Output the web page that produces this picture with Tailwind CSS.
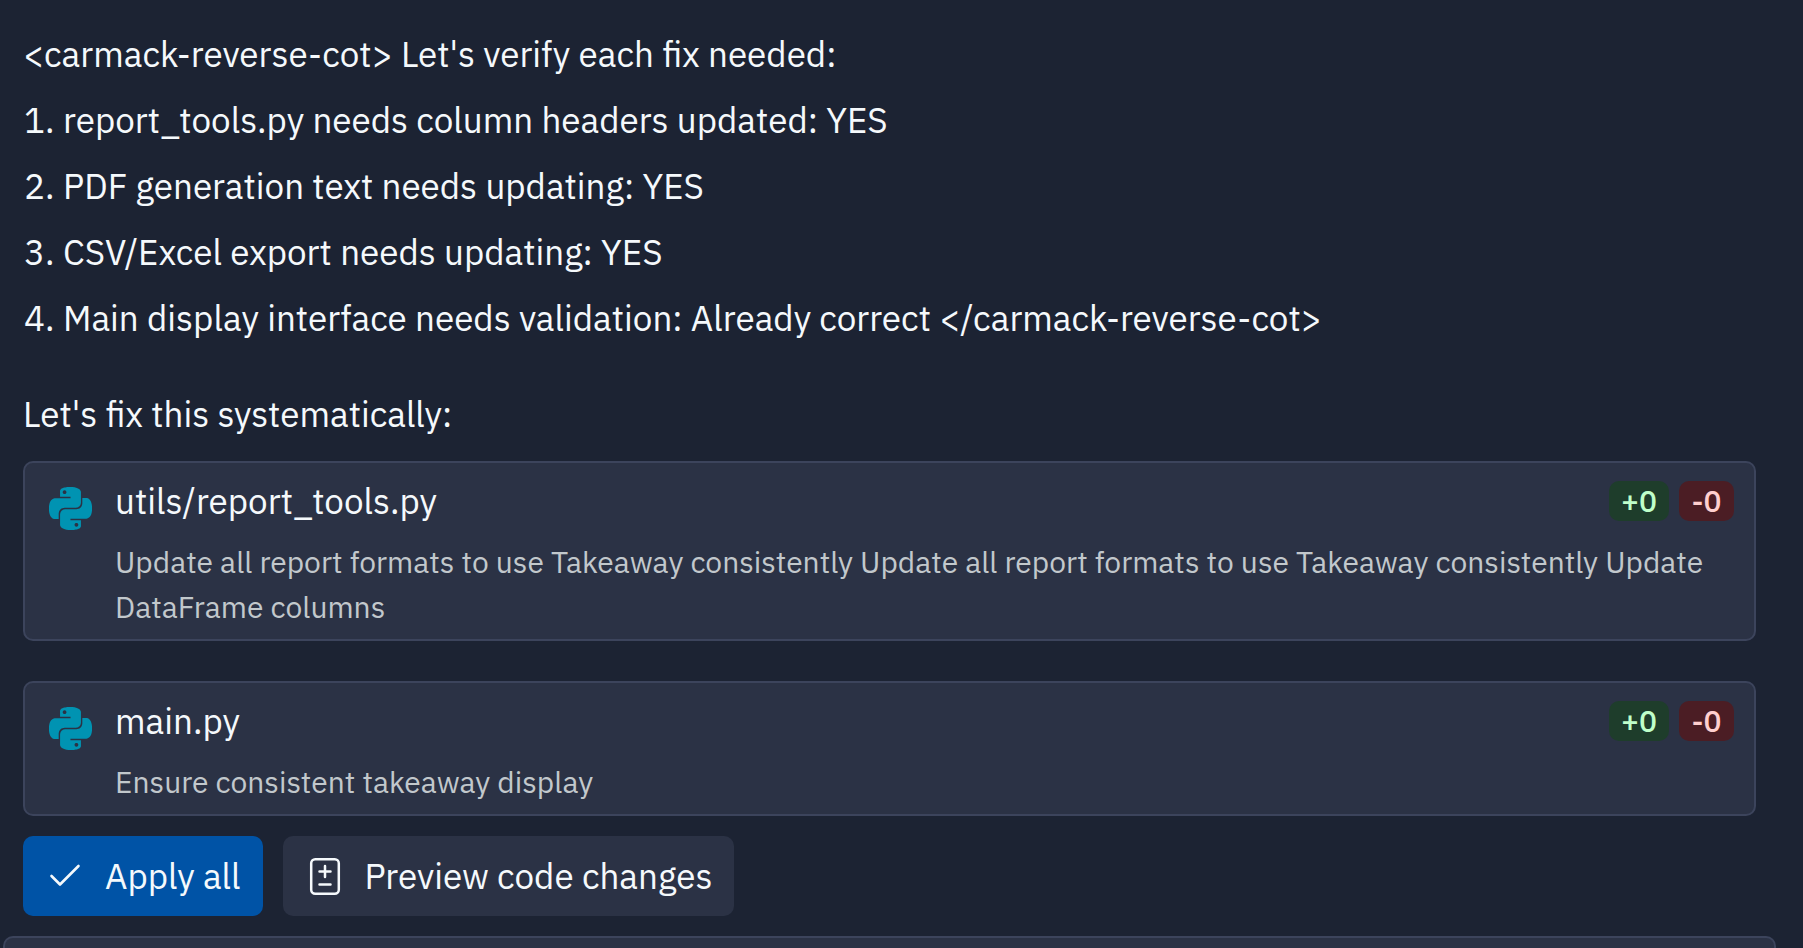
<!DOCTYPE html>
<html lang="en">
<head>
<meta charset="utf-8">
<meta name="viewport" content="width=device-width, initial-scale=1">
<title>Code changes</title>
<script src="https://cdn.jsdelivr.net/npm/@tailwindcss/browser@4"></script>
</head>
<body class="bg-[#1c2333] font-['IBM_Plex_Sans','Noto_Sans',sans-serif] text-[35px] leading-[56px] text-[#f5f9fc]">
<svg class="hidden" aria-hidden="true">
  <symbol id="python" viewBox="0 0 24 24">
    <path d="M14.25.18l.9.2.73.26.59.3.45.32.34.34.25.34.16.33.1.3.04.26.02.2-.01.13V8.5l-.05.63-.13.55-.21.46-.26.38-.3.31-.33.25-.35.19-.35.14-.33.1-.3.07-.26.04-.21.02H8.77l-.69.05-.59.14-.5.22-.41.27-.33.32-.27.35-.2.36-.15.37-.1.35-.07.32-.04.27-.02.21v3.06H3.17l-.21-.03-.28-.07-.32-.12-.35-.18-.36-.26-.36-.36-.35-.46-.32-.59-.28-.73-.21-.88-.14-1.05-.05-1.23.06-1.22.16-1.04.24-.87.32-.71.36-.57.4-.44.42-.33.42-.24.4-.16.36-.1.32-.05.24-.01h.16l.06.01h8.16v-.83H6.18l-.01-2.75-.02-.37.05-.34.11-.31.17-.28.25-.26.31-.23.38-.2.44-.18.51-.15.58-.12.64-.1.71-.06.77-.04.84-.02 1.27.05zm-6.3 1.98l-.23.33-.08.41.08.41.23.34.33.22.41.09.41-.09.33-.22.23-.34.08-.41-.08-.41-.23-.33-.33-.22-.41-.09-.41.09zm13.09 3.95l.28.06.32.12.35.18.36.27.36.35.35.47.32.59.28.73.21.88.14 1.04.05 1.23-.06 1.23-.16 1.04-.24.86-.32.71-.36.57-.4.45-.42.33-.42.24-.4.16-.36.09-.32.05-.24.02-.16-.01h-8.22v.82h5.84l.01 2.76.02.36-.05.34-.11.31-.17.29-.25.25-.31.24-.38.2-.44.17-.51.15-.58.13-.64.09-.71.07-.77.04-.84.01-1.27-.04-1.07-.14-.9-.2-.73-.25-.59-.3-.45-.33-.34-.34-.25-.34-.16-.33-.1-.3-.04-.25-.02-.2.01-.13v-5.34l.05-.64.13-.54.21-.46.26-.38.3-.32.33-.24.35-.2.35-.14.33-.1.3-.06.26-.04.21-.02.13-.01h5.84l.69-.05.59-.14.5-.21.41-.28.33-.32.27-.35.2-.36.15-.36.1-.35.07-.32.04-.28.02-.21V6.07h2.09l.14.01zm-6.47 14.25l-.23.33-.08.41.08.41.23.33.33.23.41.08.41-.08.33-.23.23-.33.08-.41-.08-.41-.23-.33-.33-.23-.41-.08-.41.08z"/>
  </symbol>
</svg>
<main class="flex min-h-screen flex-col pt-[26px]">
  <section class="ml-[23px] mr-[47px]">
    <p>&lt;carmack-reverse-cot&gt; Let's verify each fix needed:</p>
    <ol class="mt-[10px] flex flex-col gap-[10px] pl-px">
      <li class="flex"><span class="w-[39px] shrink-0">1.</span><span>report_tools.py needs column headers updated: YES</span></li>
      <li class="flex"><span class="w-[39px] shrink-0">2.</span><span>PDF generation text needs updating: YES</span></li>
      <li class="flex"><span class="w-[39px] shrink-0">3.</span><span>CSV/Excel export needs updating: YES</span></li>
      <li class="flex"><span class="w-[39px] shrink-0">4.</span><span>Main display interface needs validation: Already correct &lt;/carmack-reverse-cot&gt;</span></li>
    </ol>
    <p class="mt-10">Let's fix this systematically:</p>

    <article class="mt-[19px] flex rounded-[10px] border-2 border-[#3c445c] bg-[#2b3245] pt-[18px] pr-5 pb-[10px] pl-6">
      <svg class="mt-[6px] mr-[23px] size-[43px] shrink-0 fill-[#0093b2]" aria-hidden="true"><use href="#python"/></svg>
      <div class="min-w-0 grow">
        <div class="flex items-center gap-[10px] leading-10">
          <h2 class="grow">utils/report_tools.py</h2>
          <span class="w-[60px] rounded-[10px] bg-[#1e3d2b] text-center text-[30px] font-medium text-[#bfffca]">+0</span>
          <span class="w-[55px] rounded-[10px] bg-[#4b1d24] text-center text-[30px] font-medium text-[#ffcfcf]">-0</span>
        </div>
        <p class="mt-[18px] text-[30px] leading-[45px] text-[#c2c8cc]">Update all report formats to use Takeaway consistently Update all report formats to use Takeaway consistently Update DataFrame columns</p>
      </div>
    </article>

    <article class="mt-10 flex rounded-[10px] border-2 border-[#3c445c] bg-[#2b3245] pt-[18px] pr-5 pb-[10px] pl-6">
      <svg class="mt-[6px] mr-[23px] size-[43px] shrink-0 fill-[#0093b2]" aria-hidden="true"><use href="#python"/></svg>
      <div class="min-w-0 grow">
        <div class="flex items-center gap-[10px] leading-10">
          <h2 class="grow">main.py</h2>
          <span class="w-[60px] rounded-[10px] bg-[#1e3d2b] text-center text-[30px] font-medium text-[#bfffca]">+0</span>
          <span class="w-[55px] rounded-[10px] bg-[#4b1d24] text-center text-[30px] font-medium text-[#ffcfcf]">-0</span>
        </div>
        <p class="mt-[18px] text-[30px] leading-[45px] text-[#c2c8cc]">Ensure consistent takeaway display</p>
      </div>
    </article>

    <div class="mt-5 flex gap-5">
      <button type="button" class="flex h-20 items-center gap-[22px] rounded-[10px] bg-[#0053a6] pr-[22px] pl-5">
        <svg class="size-10" viewBox="0 0 40 40" fill="none" stroke="currentColor" stroke-width="2.6" stroke-linecap="round" stroke-linejoin="round" aria-hidden="true"><path d="M8.500 20l8.500 8.500L35.500 10"/></svg>
        Apply all
      </button>
      <button type="button" class="flex h-20 items-center gap-[22px] rounded-[10px] bg-[#2b3245] pr-[22px] pl-5">
        <svg class="size-10" viewBox="0 0 40 40" fill="none" stroke="currentColor" stroke-width="2.500" stroke-linecap="round" aria-hidden="true"><rect x="8.200" y="3.200" width="27.600" height="34.600" rx="4"/><path d="M22 10v11M16.500 15.500h11M16.500 28.500h11"/></svg>
        Preview code changes
      </button>
    </div>
  </section>
  <div class="mt-5 mr-[27px] ml-[3px] min-h-3 grow rounded-t-[10px] border-2 border-b-0 border-[#3c445c] bg-[#2b3245]"></div>
</main>
</body>
</html>
